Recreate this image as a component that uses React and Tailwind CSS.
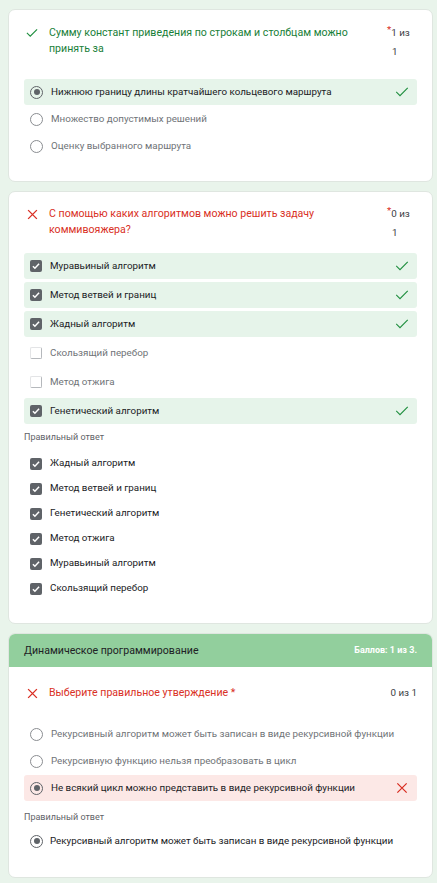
import React from 'react';

const GREEN = '#1e8e3e';
const RED = '#d93025';

function CheckIcon({ className = '', w = 2.2 }) {
  return (
    <svg viewBox="0 0 24 24" className={className} fill="none">
      <path d="M4 12.5l5 5L20 6.5" stroke={GREEN} strokeWidth={w} strokeLinecap="square" />
    </svg>
  );
}

function CrossIcon({ className = '', w = 2.4 }) {
  return (
    <svg viewBox="0 0 24 24" className={className} fill="none">
      <path d="M5 5l14 14M19 5L5 19" stroke={RED} strokeWidth={w} />
    </svg>
  );
}

function Radio({ checked }) {
  return (
    <span className={`w-[13px] h-[13px] rounded-full border-[1.5px] flex items-center justify-center shrink-0 ${checked ? 'border-[#5f6368]' : 'border-[#8a8d91]'}`}>
      {checked && <span className="w-[6px] h-[6px] rounded-full bg-[#5f6368]" />}
    </span>
  );
}

function Box({ checked }) {
  if (!checked) {
    return <span className="w-[12px] h-[12px] rounded-[2px] border border-[#b5b8bc] border-l-[#e3e4e6] border-t-[#e3e4e6] shrink-0" />;
  }
  return (
    <span className="w-[12px] h-[12px] rounded-[2px] bg-[#5f6368] flex items-center justify-center shrink-0">
      <svg viewBox="0 0 12 12" className="w-[10px] h-[10px]" fill="none">
        <path d="M2.3 6.2l2.4 2.4 5-5.2" stroke="#fff" strokeWidth="1.8" />
      </svg>
    </span>
  );
}

function Row({ kind, checked, text, state }) {
  const bg = state === 'ok' ? 'bg-[#e6f4ea]' : state === 'bad' ? 'bg-[#fce8e6]' : '';
  const color = checked ? 'text-[#202124]' : 'text-[#6f7377]';
  return (
    <div className={`flex items-center h-[26px] pl-[6px] pr-[7px] rounded-[3px] ${bg}`}>
      {kind === 'radio' ? <Radio checked={checked} /> : <Box checked={checked} />}
      <span className={`flex-1 text-[9.8px] ml-[8px] ${color}`}>{text}</span>
      {state === 'ok' && <CheckIcon className="w-[16px] h-[16px]" w={1.7} />}
      {state === 'bad' && <CrossIcon className="w-[16px] h-[16px]" w={1.9} />}
    </div>
  );
}

function Question({ ok, title, score }) {
  return (
    <div className="flex items-start">
      <div className="w-[25px] h-[16px] flex items-center justify-start pl-[1px]">
        {ok ? <CheckIcon className="w-[14px] h-[14px]" w={2} /> : <CrossIcon className="w-[15px] h-[15px]" w={2.2} />}
      </div>
      <div className={`flex-1 text-[10.6px] leading-[16px] pr-[6px] ${ok ? 'text-[#188038]' : 'text-[#d93025]'}`}>{title}</div>
      {score}
    </div>
  );
}

function StackScore({ got }) {
  return (
    <div className="w-[30px] text-[9.8px] text-[#3c4043] leading-[19px] -mt-[2px] h-[32px]">
      <div><span className="text-[#d93025] relative -top-[3px]">*</span>{got} из</div>
      <div className="pl-[5px]">1</div>
    </div>
  );
}

export default function App() {
  return (
    <div className="min-h-[883px] bg-[#e9f4eb] pt-[9px] pb-[5px] pl-[8px] pr-[4px] flex flex-col gap-[9px]" style={{ fontFamily: 'Roboto, "Noto Sans", sans-serif' }}>
      <div className="bg-white rounded-[7px] border border-[#dfe6e0] px-[15px] pt-[15px] pb-[22px]">
        <Question ok title="Сумму констант приведения по строкам и столбцам можно принять за" score={<StackScore got="1" />} />
        <div className="mt-[22px] flex flex-col gap-[1px]">
          <Row kind="radio" checked text="Нижнюю границу длины кратчайшего кольцевого маршрута" state="ok" />
          <Row kind="radio" text="Множество допустимых решений" />
          <Row kind="radio" text="Оценку выбранного маршрута" />
        </div>
      </div>

      <div className="bg-white rounded-[7px] border border-[#dfe6e0] px-[15px] pt-[14px] pb-[22px]">
        <Question title="С помощью каких алгоритмов можно решить задачу коммивояжера?" score={<StackScore got="0" />} />
        <div className="mt-[15px] flex flex-col gap-[3px]">
          <Row kind="box" checked text="Муравьиный алгоритм" state="ok" />
          <Row kind="box" checked text="Метод ветвей и границ" state="ok" />
          <Row kind="box" checked text="Жадный алгоритм" state="ok" />
          <Row kind="box" text="Скользящий перебор" />
          <Row kind="box" text="Метод отжига" />
          <Row kind="box" checked text="Генетический алгоритм" state="ok" />
        </div>
        <div className="mt-[6px] text-[9px] text-[#5f6368] leading-[14px]">Правильный ответ</div>
        <div className="mt-[7px] flex flex-col">
          {['Жадный алгоритм', 'Метод ветвей и границ', 'Генетический алгоритм', 'Метод отжига', 'Муравьиный алгоритм', 'Скользящий перебор'].map((t) => (
            <div key={t} className="flex items-center h-[25px] pl-[6px]">
              <Box checked />
              <span className="ml-[8px] text-[9.8px] text-[#202124]">{t}</span>
            </div>
          ))}
        </div>
      </div>

      <div className="bg-white rounded-[7px] border border-[#dfe6e0] overflow-hidden">
        <div className="h-[33px] bg-[#92cf9d] flex items-center justify-between px-[15px]">
          <span className="text-[10.6px] text-[#202124]">Динамическое программирование</span>
          <span className="text-[9px] font-bold text-white">Баллов: 1 из 3.</span>
        </div>
        <div className="px-[15px] pt-[18px] pb-[23px]">
          <Question title="Выберите правильное утверждение *" score={<div className="text-[9.8px] text-[#3c4043] leading-[16px]">0 из 1</div>} />
          <div className="mt-[20px] flex flex-col gap-[1px]">
            <Row kind="radio" text="Рекурсивный алгоритм может быть записан в виде рекурсивной функции" />
            <Row kind="radio" text="Рекурсивную функцию нельзя преобразовать в цикл" />
            <Row kind="radio" checked text="Не всякий цикл можно представить в виде рекурсивной функции" state="bad" />
          </div>
          <div className="mt-[9px] text-[9px] text-[#5f6368] leading-[14px]">Правильный ответ</div>
          <div className="mt-[4px] flex items-center h-[26px] pl-[6px]">
            <Radio checked />
            <span className="ml-[7px] text-[9.8px] text-[#202124]">Рекурсивный алгоритм может быть записан в виде рекурсивной функции</span>
          </div>
        </div>
      </div>
    </div>
  );
}
